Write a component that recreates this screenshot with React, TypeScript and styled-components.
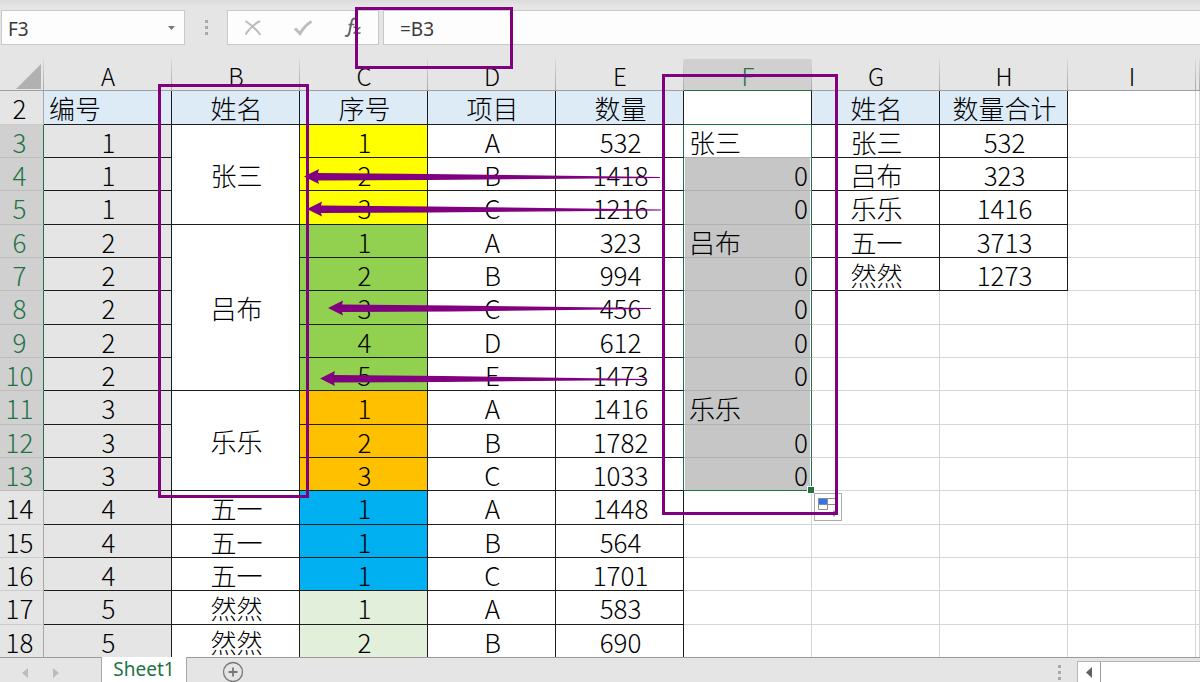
import React from "react";
import styled, { createGlobalStyle, css } from "styled-components";

const GREEN = "#217346";
const PURPLE = "#800080";
const CHROME = "#e5e5e5";
const INK = "#1c1c1c";
const GRID = "#d6d6d6";

const GlobalStyle = createGlobalStyle`
  *, *::before, *::after { box-sizing: border-box; }
  body {
    margin: 0;
    background: ${CHROME};
    color: #000;
    font-family: "Noto Sans CJK SC", "Noto Sans", sans-serif;
  }
  button, input { font: inherit; color: inherit; border-radius: 0; }
`;

const Page = styled.main`
  position: relative;
  overflow: hidden;
`;

const FormulaRow = styled.div`
  display: flex;
  align-items: stretch;
  height: 59px;
  padding: 10px 0 14px 1px;
  background: linear-gradient(to bottom, #dcdcdc, ${CHROME} 6px);
`;

const NameBox = styled.div`
  display: flex;
  width: 184px;
  border: 1px solid #c9c9c9;
  background: #fdfdfd;
`;

const TextInput = styled.input`
  flex: 1;
  min-width: 0;
  border: 0;
  padding: 2px 6px 0;
  background: transparent;
  color: #3a3a3a;
  font-family: "Noto Sans", sans-serif;
  font-size: 19px;
  outline: none;
`;

const PlainButton = styled.button`
  display: flex;
  align-items: center;
  justify-content: center;
  padding: 0;
  border: 0;
  background: transparent;
`;

const DropButton = styled(PlainButton)`
  width: 25px;
`;

const Dots = styled.span<{ $gap: number }>`
  display: flex;
  flex-direction: column;
  align-items: center;
  justify-content: center;
  gap: ${(p) => p.$gap}px;

  i {
    width: 3px;
    height: 3px;
    background: #a9a9a9;
  }
`;

const Splitter = styled(Dots)`
  width: 42px;
`;

const EditButtons = styled.div`
  display: flex;
  width: 152px;
  margin-right: 4px;
  border: 1px solid #c9c9c9;
  background: #fdfdfd;
`;

const EditButton = styled(PlainButton)`
  flex: 1;
`;

const FormulaInput = styled(TextInput)`
  border: 1px solid #c9c9c9;
  border-right: 0;
  padding: 2px 16px 0;
  background: #fdfdfd;
`;

const Sheet = styled.table`
  width: 100%;
  table-layout: fixed;
  border-collapse: separate;
  border-spacing: 0;
  background: #fff;
  font-size: 26px;
  font-weight: 300;
  line-height: 30px;

  tbody tr { height: 33px; }
  tbody tr:nth-child(3n + 1) { height: 34px; }
`;

const Col = styled.col<{ $w?: number }>`
  width: ${(p) => (p.$w ? `${p.$w}px` : "auto")};
`;

const ColumnHeader = styled.th<{ $selected?: boolean }>`
  height: 32px;
  padding: 2px 0 0;
  border-bottom: 1px solid ${(p) => (p.$selected ? GREEN : "#a0a0a0")};
  background:
    linear-gradient(to bottom, #dadada, #a8a8a8) right / 1px 100% no-repeat,
    ${(p) => (p.$selected ? "#d0d0d0" : CHROME)};
  color: ${(p) => (p.$selected ? GREEN : "#000")};
  font-size: 24px;
  font-weight: 300;
  line-height: 26px;
`;

const Corner = styled(ColumnHeader)`
  padding: 3px 0 0 14px;

  svg { display: block; }
`;

const RowHeader = styled.th<{ $selected?: boolean }>`
  padding: 1px 4px 0 0;
  border-right: 1px solid ${(p) => (p.$selected ? GREEN : "#a8a8a8")};
  border-bottom: 1px solid ${(p) => (p.$selected ? "#bdbdbd" : "#cccccc")};
  background: ${(p) => (p.$selected ? "#d0d0d0" : CHROME)};
  color: ${(p) => (p.$selected ? GREEN : "#000")};
  font-weight: 300;
`;

type CellProps = {
  $fill?: string;
  $boxed?: boolean;
  $align?: "left" | "center" | "right";
  $rightEdge?: string;
  $bottomEdge?: string;
};

const Cell = styled.td<CellProps>`
  padding: 1px 3px 0 5px;
  text-align: ${(p) => p.$align ?? "center"};
  background: ${(p) => p.$fill ?? "#fff"};
  border-style: solid;
  border-width: 0 1px 1px 0;
  border-right-color: ${(p) => p.$rightEdge ?? (p.$boxed ? INK : GRID)};
  border-bottom-color: ${(p) => p.$bottomEdge ?? (p.$boxed ? INK : GRID)};
`;

const SelectedCell = styled(Cell)<{ $active?: boolean }>`
  position: relative;
  ${(p) =>
    !p.$active &&
    css`
      box-shadow: inset 1px 0 0 #fff, inset -1px 0 0 #fff;
    `}
`;

const FillHandle = styled.span`
  position: absolute;
  right: -4px;
  bottom: -4px;
  z-index: 1;
  width: 8px;
  height: 8px;
  border: 1px solid #fff;
  background: ${GREEN};
`;

const AutoFillButton = styled(PlainButton)`
  position: absolute;
  right: -31px;
  bottom: -31px;
  z-index: 1;
  width: 28px;
  height: 28px;
  border: 1px solid #ababab;
  background: #fff;
`;

const BottomBar = styled.footer`
  position: relative;
  display: flex;
  height: 25px;
  margin-top: -1px;
  border-top: 1px solid #9b9b9b;
  background: ${CHROME};
`;

const SheetNav = styled.div`
  display: flex;
  align-items: flex-end;
  justify-content: space-between;
  width: 101px;
  padding: 0 40px 3px 20px;
`;

const NavButton = styled(PlainButton)`
  width: 10px;
  height: 13px;
`;

const SheetTab = styled.button`
  width: 86px;
  margin-top: -1px;
  padding: 0 0 2px;
  border: 1px solid #a8a8a8;
  border-width: 0 1px;
  background: #fff;
  color: ${GREEN};
  font-family: "Noto Sans", sans-serif;
  font-size: 19px;
  line-height: 22px;
`;

const AddSheet = styled(PlainButton)`
  align-self: flex-start;
  width: 22px;
  height: 22px;
  margin: 3px auto 0 35px;
`;

const BarDots = styled(Dots)`
  padding-top: 5px;
  margin-right: 16px;
`;

const ScrollBar = styled.div`
  display: flex;
  width: 123px;
  margin-top: 3px;
  border: 1px solid #b5b5b5;
  border-width: 1px 0 0 1px;
  background: #fff;
`;

const ScrollButton = styled(PlainButton)`
  width: 23px;
  border-right: 1px solid #9b9b9b;
`;

const Annotations = styled.svg`
  position: absolute;
  top: 0;
  left: 0;
  z-index: 2;
  pointer-events: none;
`;

const YELLOW = "#ffff00";
const LIME = "#92d050";
const ORANGE = "#ffc000";
const BLUE = "#00b0f0";
const MINT = "#e2efda";
const HEAD = "#ddebf7";
const GREY = "#e5e5e5";
const SELECTED = "#c6c6c6";

type Row = {
  n: number;
  id: string;
  name?: string;
  span?: number;
  seq: string;
  item: string;
  qty: string;
  fill: string;
  f?: string;
  sum?: [string, string];
};

const rows: Row[] = [
  { n: 3, id: "1", name: "张三", span: 3, seq: "1", item: "A", qty: "532", fill: YELLOW, f: "张三", sum: ["张三", "532"] },
  { n: 4, id: "1", seq: "2", item: "B", qty: "1418", fill: YELLOW, f: "0", sum: ["吕布", "323"] },
  { n: 5, id: "1", seq: "3", item: "C", qty: "1216", fill: YELLOW, f: "0", sum: ["乐乐", "1416"] },
  { n: 6, id: "2", name: "吕布", span: 5, seq: "1", item: "A", qty: "323", fill: LIME, f: "吕布", sum: ["五一", "3713"] },
  { n: 7, id: "2", seq: "2", item: "B", qty: "994", fill: LIME, f: "0", sum: ["然然", "1273"] },
  { n: 8, id: "2", seq: "3", item: "C", qty: "456", fill: LIME, f: "0" },
  { n: 9, id: "2", seq: "4", item: "D", qty: "612", fill: LIME, f: "0" },
  { n: 10, id: "2", seq: "5", item: "E", qty: "1473", fill: LIME, f: "0" },
  { n: 11, id: "3", name: "乐乐", span: 3, seq: "1", item: "A", qty: "1416", fill: ORANGE, f: "乐乐" },
  { n: 12, id: "3", seq: "2", item: "B", qty: "1782", fill: ORANGE, f: "0" },
  { n: 13, id: "3", seq: "3", item: "C", qty: "1033", fill: ORANGE, f: "0" },
  { n: 14, id: "4", name: "五一", seq: "1", item: "A", qty: "1448", fill: BLUE },
  { n: 15, id: "4", name: "五一", seq: "1", item: "B", qty: "564", fill: BLUE },
  { n: 16, id: "4", name: "五一", seq: "1", item: "C", qty: "1701", fill: BLUE },
  { n: 17, id: "5", name: "然然", seq: "1", item: "A", qty: "583", fill: MINT },
  { n: 18, id: "5", name: "然然", seq: "2", item: "B", qty: "690", fill: MINT },
];

const columns = ["A", "B", "C", "D", "E", "F", "G", "H", "I"];

const Arrow = ({ x, y, end, drop }: { x: number; y: number; end: number; drop: number }) => (
  <path
    fill={PURPLE}
    d={`M${x} ${y} L${x + 15} ${y - 7.5} L${x + 14} ${y - 3.5} L${x + 124} ${y - 2.5} L${end} ${y + drop - 0.5} V${y + drop + 0.5} L${x + 124} ${y + 3.5} L${x + 14} ${y + 4} L${x + 15} ${y + 7.5} Z`}
  />
);

const AutoFillIcon = () => (
  <svg width="22" height="22" viewBox="0 0 22 22" fill="none" stroke="#8c8c8c">
    <path d="M1.500 8.500H10.500V13.500H1.500Z M10.500 2.500H21 M10.500 8.500H21" />
    <path d="M1.500 2.500H10.500V8.500H1.500Z" fill="#2f74f5" />
    <path d="M1.500 16v4M4.500 16v4M7.500 16v4M10.500 16v4" strokeDasharray="1 1" />
    <path d="M14 17.500h6M17 14.500v6" stroke="#444" />
  </svg>
);

function SheetRow({ row }: { row: Row }) {
  const inSelection = row.f !== undefined;
  const first = row.n === 3;
  const last = row.n === 13;
  return (
    <tr>
      <RowHeader scope="row" $selected={inSelection}>{row.n}</RowHeader>
      <Cell $boxed $fill={GREY}>{row.id}</Cell>
      {row.name && <Cell $boxed rowSpan={row.span ?? 1}>{row.name}</Cell>}
      <Cell $boxed $fill={row.fill}>{row.seq}</Cell>
      <Cell $boxed>{row.item}</Cell>
      <Cell $boxed $rightEdge={inSelection ? GREEN : undefined}>{row.qty}</Cell>
      {inSelection ? (
        <SelectedCell
          $active={first}
          $align={row.f === "0" ? "right" : "left"}
          $fill={first ? "#fff" : SELECTED}
          $rightEdge={GREEN}
          $bottomEdge={last ? GREEN : "#b0b0b0"}
        >
          {row.f}
          {last && (
            <>
              <FillHandle />
              <AutoFillButton type="button" aria-label="Auto fill options">
                <AutoFillIcon />
              </AutoFillButton>
            </>
          )}
        </SelectedCell>
      ) : (
        <Cell />
      )}
      <Cell $boxed={!!row.sum}>{row.sum?.[0]}</Cell>
      <Cell $boxed={!!row.sum}>{row.sum?.[1]}</Cell>
      <Cell />
      <Cell />
    </tr>
  );
}

export default function App() {
  return (
    <Page>
      <GlobalStyle />
      <FormulaRow>
        <NameBox>
          <TextInput aria-label="Name box" defaultValue="F3" />
          <DropButton type="button" aria-label="Show names">
            <svg width="7" height="4" viewBox="0 0 7 4"><path d="M0 0H7L3.500 4Z" fill="#777" /></svg>
          </DropButton>
        </NameBox>
        <Splitter $gap={3}><i /><i /><i /></Splitter>
        <EditButtons>
          <EditButton type="button" aria-label="Cancel">
            <svg width="18" height="16" viewBox="0 0 18 16" fill="none" stroke="#bdbdbd" strokeWidth="2">
              <path d="M1.500 1C6 4 12 9 16.500 15M16 1C10 4 5 9 1.500 14.500" />
            </svg>
          </EditButton>
          <EditButton type="button" aria-label="Enter">
            <svg width="20" height="16" viewBox="0 0 20 16" fill="none" stroke="#bdbdbd" strokeWidth="3">
              <path d="M2 8.500L7 13.500C10 8.500 14 4 18.500 1.500" />
            </svg>
          </EditButton>
          <EditButton type="button" aria-label="Insert function">
            <svg width="18" height="21" viewBox="0 0 18 21" fill="none" stroke="#666" strokeWidth="1.500">
              <path d="M12 2.500C10 0.500 8 2 7.500 5L5.500 15C5 18.500 3 20 1 18.500" strokeWidth="2" />
              <path d="M4.500 7.500H10.500M9.500 10.500C12 9.500 12.500 12 13 14C13.500 16 14.500 17 16.500 15.500M16.500 10.500C14 10.500 12 15.500 9.500 16.500" />
            </svg>
          </EditButton>
        </EditButtons>
        <FormulaInput aria-label="Formula bar" defaultValue="=B3" />
      </FormulaRow>

      <Sheet>
        <colgroup>
          <Col $w={44} />
          {columns.map((c) => <Col key={c} $w={128} />)}
          <Col />
        </colgroup>
        <thead>
          <tr>
            <Corner aria-label="Select all">
              <svg width="27" height="25" viewBox="0 0 27 25"><path d="M27 0V25H2Z" fill="#b1b1b1" /></svg>
            </Corner>
            {columns.map((c) => (
              <ColumnHeader key={c} scope="col" $selected={c === "F"}>{c}</ColumnHeader>
            ))}
            <ColumnHeader />
          </tr>
        </thead>
        <tbody>
          <tr>
            <RowHeader scope="row">2</RowHeader>
            <Cell $boxed $fill={HEAD} $align="left">编号</Cell>
            <Cell $boxed $fill={HEAD}>姓名</Cell>
            <Cell $boxed $fill={HEAD}>序号</Cell>
            <Cell $boxed $fill={HEAD}>项目</Cell>
            <Cell $boxed $fill={HEAD}>数量</Cell>
            <Cell $boxed $bottomEdge={GREEN} />
            <Cell $boxed $fill={HEAD}>姓名</Cell>
            <Cell $boxed $fill={HEAD}>数量合计</Cell>
            <Cell />
            <Cell />
          </tr>
          {rows.map((row) => <SheetRow key={row.n} row={row} />)}
        </tbody>
      </Sheet>

      <BottomBar>
        <SheetNav>
          <NavButton type="button" aria-label="Previous sheet">
            <svg width="6" height="10" viewBox="0 0 6 10"><path d="M6 0V10L0 5Z" fill="#bcbcbc" /></svg>
          </NavButton>
          <NavButton type="button" aria-label="Next sheet">
            <svg width="6" height="10" viewBox="0 0 6 10"><path d="M0 0V10L6 5Z" fill="#bcbcbc" /></svg>
          </NavButton>
        </SheetNav>
        <SheetTab type="button">Sheet1</SheetTab>
        <AddSheet type="button" aria-label="New sheet">
          <svg width="22" height="22" viewBox="0 0 22 22" fill="none" stroke="#777">
            <circle cx="11" cy="11" r="9.500" strokeWidth="1.300" />
            <path d="M6.500 11H15.500M11 6.500V15.500" strokeWidth="1.800" />
          </svg>
        </AddSheet>
        <BarDots $gap={3}><i /><i /><i /></BarDots>
        <ScrollBar>
          <ScrollButton type="button" aria-label="Scroll left">
            <svg width="6" height="11" viewBox="0 0 6 11"><path d="M6 0V11L0 5.500Z" fill="#606060" /></svg>
          </ScrollButton>
        </ScrollBar>
      </BottomBar>

      <Annotations width="1200" height="682" aria-hidden="true">
        <g fill="none" stroke={PURPLE} strokeWidth="3">
          <rect x="356.500" y="8.500" width="155" height="59" />
          <rect x="159.500" y="85.500" width="148" height="411" />
          <rect x="663.500" y="75.500" width="173" height="438" />
        </g>
        <Arrow x={304} y={176.5} end={660} drop={1} />
        <Arrow x={307} y={209} end={661} drop={1} />
        <Arrow x={328} y={308} end={651} drop={0.5} />
        <Arrow x={320} y={378.5} end={647} drop={1} />
      </Annotations>
    </Page>
  );
}
